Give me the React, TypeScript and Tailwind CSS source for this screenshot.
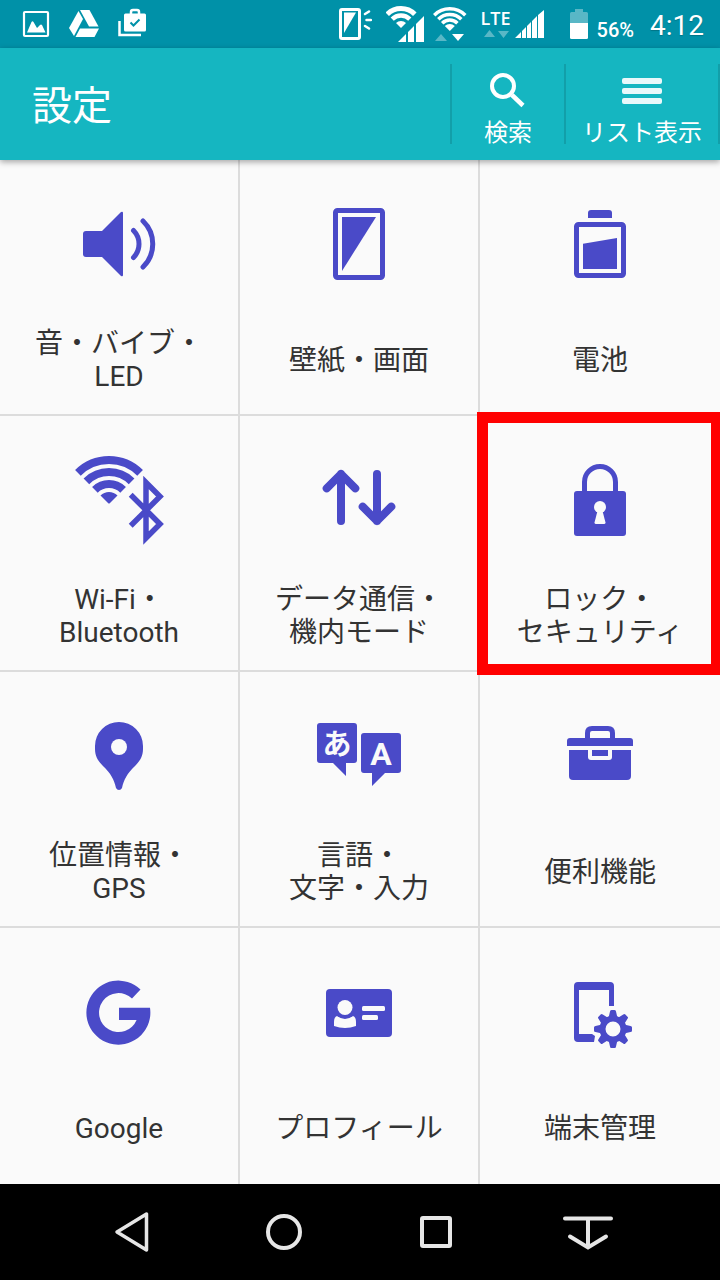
import type { ReactNode } from "react";

interface Tile {
  id: string;
  lines: string[];
  icon: ReactNode;
  highlighted?: boolean;
}

const BG = "#fafafa";

function SoundIcon() {
  return (
    <>
      <path d="M15 35h16l19-19q2-1 2 1v62q0 2-2 1L31 61H15q-3 0-3-3V38q0-3 3-3z" />
      <path
        d="M62.5 34.5a19.3 19.3 0 0 1 0 27M72 25a32 32 0 0 1 0 46"
        fill="none"
        stroke="currentColor"
        strokeWidth="5"
        strokeLinecap="round"
      />
    </>
  );
}

function ScreenIcon() {
  return (
    <>
      <rect x="24.5" y="14.5" width="47" height="67" rx="2" fill="none" stroke="currentColor" strokeWidth="5" />
      <path d="M31 21h34L31 75z" />
    </>
  );
}

function BatteryIcon() {
  return (
    <>
      <path d="M36 22v-5q0-3 3-3h18q3 0 3 3v5z" />
      <rect x="24.5" y="28.5" width="47" height="51" rx="2" fill="none" stroke="currentColor" strokeWidth="5" />
      <path d="M31 47.7L65 42v31H31z" />
    </>
  );
}

function WirelessIcon() {
  return (
    <>
      <g fill="none" stroke="currentColor" strokeWidth="8">
        <path d="M6.9 20.9a44 44 0 0 1 62.2 0" />
        <path d="M15.4 29.4a32 32 0 0 1 45.2 0" />
        <path d="M23.9 37.9a20 20 0 0 1 28.2 0" />
      </g>
      <path d="M29.5 43.5a12 12 0 0 1 17 0L39 51q-1 1-2 0z" />
      <path
        d="M59.7 42.7L89 72 75 86V30.5l14 14-29.3 29.3"
        fill="none"
        stroke="currentColor"
        strokeWidth="5.5"
      />
    </>
  );
}

function DataIcon() {
  return (
    <path
      d="M30 69V22M15.7 36.3L30 22l14.3 14.3M66 22v47M51.7 54.7L66 69l14.3-14.3"
      fill="none"
      stroke="currentColor"
      strokeWidth="8"
      strokeLinecap="round"
      strokeLinejoin="round"
    />
  );
}

function LockIcon() {
  return (
    <>
      <path d="M32.5 40V30a15.5 15.5 0 0 1 31 0v10" fill="none" stroke="currentColor" strokeWidth="5" />
      <rect x="22" y="39" width="52" height="45" rx="3" />
      <circle cx="48" cy="55" r="6" fill={BG} />
      <path d="M45.5 59h5l3 11.5q0 1.5-1.5 1.5h-8q-1.5 0-1.5-1.5z" fill={BG} />
    </>
  );
}

function PinIcon() {
  return (
    <>
      <path d="M24 38a24 24 0 0 1 48 0v3c0 8-4 13-8 17-8 8-11 13-13 22q-1 2-3 2t-3-2c-2-9-5-14-13-22-4-4-8-9-8-17z" />
      <circle cx="48" cy="39" r="8" fill={BG} />
    </>
  );
}

function LanguageIcon() {
  return (
    <>
      <path d="M9 15h34q3 0 3 3v34q0 3-3 3h-8v13L22 55H9q-3 0-3-3V18q0-3 3-3z" />
      <path d="M53 25h34q3 0 3 3v34q0 3-3 3H74L61 78V65h-8q-3 0-3-3V28q0-3 3-3z" />
      <text x="26" y="47" textAnchor="middle" fill={BG} fontSize="29" fontWeight="700">
        あ
      </text>
      <text x="70" y="57" textAnchor="middle" fill={BG} fontSize="32" fontWeight="700">
        A
      </text>
    </>
  );
}

function ToolboxIcon() {
  return (
    <>
      <path d="M35.5 31v-6q0-4.500 4.500-4.500h16q4.500 0 4.500 4.500v6" fill="none" stroke="currentColor" strokeWidth="5" />
      <path d="M15 38v-5q0-3 3-3h60q3 0 3 3v5z" />
      <path d="M17 42h62v26q0 4-4 4H21q-4 0-4-4z" />
      <path d="M36 42h24v7q0 3-3 3H39q-3 0-3-3z" fill={BG} />
      <path d="M40 42h16v6H40z" />
    </>
  );
}

function GoogleIcon() {
  return <path d="M69.5 25.5A32 32 0 1 0 79 43.7H48V56h17.6A19.500 19.500 0 1 1 61 34.500z" />;
}

function ProfileIcon() {
  return (
    <>
      <rect x="15" y="25" width="66" height="48" rx="4" />
      <g fill={BG}>
        <circle cx="34" cy="43.5" r="7.5" />
        <path d="M26 52q8 6 16 0 3 1 3 6v4q-11 4-22 0v-4q0-5 3-6z" />
        <rect x="51" y="42" width="23" height="5" rx="1.5" />
        <rect x="51" y="51" width="16" height="5" rx="1.5" />
      </g>
    </>
  );
}

function DeviceIcon() {
  const teeth = [0, 45, 90, 135, 180, 225, 270, 315];
  return (
    <>
      <path d="M26 18h32q4 0 4 4v20h-5V26H27v44h13l3 2-1 6H26q-4 0-4-4V22q0-4 4-4z" />
      <circle cx="61" cy="65" r="10.5" fill="none" stroke="currentColor" strokeWidth="6" />
      {teeth.map((angle) => (
        <path
          key={angle}
          d="M56.5 54l1.5-6.5q0-1.5 1.5-1.5h3q1.5 0 1.5 1.5l1.5 6.5z"
          transform={`rotate(${angle} 61 65)`}
        />
      ))}
    </>
  );
}

const tiles: Tile[] = [
  { id: "sound", lines: ["音・バイブ・", "LED"], icon: <SoundIcon /> },
  { id: "screen", lines: ["壁紙・画面"], icon: <ScreenIcon /> },
  { id: "battery", lines: ["電池"], icon: <BatteryIcon /> },
  { id: "wireless", lines: ["Wi-Fi・", "Bluetooth"], icon: <WirelessIcon /> },
  { id: "data", lines: ["データ通信・", "機内モード"], icon: <DataIcon /> },
  { id: "lock", lines: ["ロック・", "セキュリティ"], icon: <LockIcon />, highlighted: true },
  { id: "location", lines: ["位置情報・", "GPS"], icon: <PinIcon /> },
  { id: "language", lines: ["言語・", "文字・入力"], icon: <LanguageIcon /> },
  { id: "tools", lines: ["便利機能"], icon: <ToolboxIcon /> },
  { id: "google", lines: ["Google"], icon: <GoogleIcon /> },
  { id: "profile", lines: ["プロフィール"], icon: <ProfileIcon /> },
  { id: "device", lines: ["端末管理"], icon: <DeviceIcon /> },
];

function StatusBar() {
  return (
    <div className="flex h-12 items-center justify-between bg-[#0091a8] pr-4 pl-[22px] text-white">
      <div className="flex items-center gap-[18px]">
        <svg width="28" height="48" viewBox="0 0 28 48" fill="currentColor">
          <rect x="2" y="12" width="24" height="24" rx="1" fill="none" stroke="currentColor" strokeWidth="2.2" />
          <path d="M5 32.5L9.5 22q1-1.5 2 0l3.5 6 3-3q1-1 2 0l3.5 7.5z" />
        </svg>
        <svg width="32" height="48" viewBox="0 0 32 48" fill="currentColor">
          <path d="M10.5 11l4.5 8L6 36 1 28z" />
          <path d="M12 10h9.5l9 16.5H21z" />
          <path d="M12 28.5h19L26.5 37H7.5z" />
        </svg>
        <svg width="30" height="48" viewBox="0 0 30 48" fill="currentColor">
          <path d="M13 14v-2q0-2 2-2h4q2 0 2 2v2M1.5 21v14H23" fill="none" stroke="currentColor" strokeWidth="2.5" />
          <rect x="6" y="13.5" width="22" height="18" rx="1.5" />
          <path d="M12.5 22.5l3 3 6-6" fill="none" stroke="#0091a8" strokeWidth="2" />
        </svg>
      </div>
      <div className="flex items-center">
        <svg className="mr-3.5" width="33" height="48" viewBox="0 0 33 48" fill="currentColor">
          <rect x="1.5" y="9.5" width="19" height="29" rx="1.5" fill="none" stroke="currentColor" strokeWidth="3" />
          <path d="M5 12.5h12L5 33z" />
          <path
            d="M26 14l4-2.5M27.5 20H32M26 26l4 2.5"
            stroke="currentColor"
            strokeWidth="2.5"
            strokeLinecap="round"
          />
        </svg>
        <svg className="mr-2" width="39" height="48" viewBox="0 0 39 48" fill="currentColor">
          <path d="M1.2 14.2a19.5 19.5 0 0 1 27.6 0" fill="none" stroke="currentColor" strokeWidth="5" />
          <path d="M6.2 19.2a12.5 12.5 0 0 1 17.6 0" fill="none" stroke="currentColor" strokeWidth="4.5" />
          <path d="M10 23a7 7 0 0 1 10 0l-5 5z" />
          <path d="M12 42l8-8v8zM22 42V32l6-6v16zM30 42V24l8-8v26z" />
        </svg>
        <svg className="mr-3.5" width="34" height="48" viewBox="0 0 34 48" fill="currentColor">
          <g fill="none" stroke="currentColor" strokeWidth="3.5">
            <path d="M1.2 15.2a22 22 0 0 1 31.1 0" />
            <path d="M5.3 19.3a16.3 16.3 0 0 1 23 0" />
            <path d="M9.2 23.2a10.8 10.8 0 0 1 15.2 0" />
          </g>
          <path d="M11.8 26a7 7 0 0 1 10 0l-5 5z" />
          <path d="M2 41l6-7 6 7z" opacity="0.35" />
          <path d="M19 34h12l-6 7z" />
        </svg>
        <div className="mr-1 flex flex-col items-center gap-0.5">
          <span className="font-['Open_Sans'] text-lg leading-5 font-semibold">LTE</span>
          <svg width="26" height="10" viewBox="0 0 26 10" fill="currentColor" opacity="0.35">
            <path d="M1 7l5.5-7L12 7zM15 1h11l-5.5 7z" />
          </svg>
        </div>
        <svg className="mr-6" width="30" height="48" viewBox="0 0 30 48" fill="currentColor">
          <path d="M0 38l6-6v6zM7 38v-7l4-4v11zM12 38V26l4-4v16zM17 38V21l5-5v22zM23 38V15l6-5v28z" />
        </svg>
        <svg className="mr-2" width="20" height="48" viewBox="0 0 20 48" fill="currentColor">
          <path d="M1 23v-9.5Q1 12 2.5 12H6V9h8v3h3.5q1.5 0 1.5 1.5V23z" opacity="0.35" />
          <path d="M1 23h18v14.5q0 1.5-1.5 1.5h-15Q1 39 1 37.5z" />
        </svg>
        <span className="mr-4 pt-3 text-xl leading-6 font-medium">56%</span>
        <span className="pt-1 text-[28px] leading-8 text-shadow-xs">4:12</span>
      </div>
    </div>
  );
}

function Header() {
  return (
    <header className="relative z-10 flex h-28 items-center bg-[#15b6c1] text-white shadow-[0_2px_6px_rgba(0,0,0,0.35)]">
      <h1 className="flex-1 pt-1.5 pl-8 text-[40px] leading-[48px]">設定</h1>
      <button className="flex h-20 w-[116px] flex-col items-center gap-2 border-x-2 border-[#129fa9] pt-2">
        <svg className="shrink-0" width="40" height="40" viewBox="0 0 40 40" fill="none" stroke="currentColor">
          <circle cx="15" cy="14" r="11" strokeWidth="4" />
          <path d="M24 23l11 10.5" strokeWidth="4.5" />
        </svg>
        <span className="text-2xl leading-[26px]">検索</span>
      </button>
      <button className="flex h-20 w-[154px] flex-col items-center gap-2 border-r-2 border-[#129fa9] pt-2">
        <svg className="shrink-0" width="40" height="40" viewBox="0 0 40 40" fill="#e9f8fa">
          <rect y="6" width="40" height="6" rx="2" />
          <rect y="16" width="40" height="6" rx="2" />
          <rect y="26" width="40" height="6" rx="2" />
        </svg>
        <span className="text-2xl leading-[26px]">リスト表示</span>
      </button>
    </header>
  );
}

function SettingTile({ tile }: { tile: Tile }) {
  return (
    <button className="relative flex min-h-64 flex-col items-center border-r-2 border-b-2 border-[#dcdcdc] pt-9 nth-[3n]:border-r-0 nth-[n+10]:border-b-0">
      <svg className="text-[#4a4ac8]" width="96" height="96" viewBox="0 0 96 96" fill="currentColor">
        {tile.icon}
      </svg>
      <span className="mt-[34px] flex h-[68px] flex-col justify-center text-[28px] leading-[33px] text-[#333]">
        {tile.lines.map((line) => (
          <span key={line}>{line}</span>
        ))}
      </span>
      {tile.highlighted && (
        <span className="absolute -top-1 right-0 -bottom-[5px] -left-[3px] z-10 border-[11px] border-r-[9px] border-[#ff0000]" />
      )}
    </button>
  );
}

function NavBar() {
  return (
    <nav className="grid h-24 grid-cols-4 bg-black px-14 text-[#e6e6e6]">
      <button className="flex items-center justify-center" aria-label="戻る">
        <svg width="56" height="56" viewBox="0 0 56 56" fill="none" stroke="currentColor" strokeWidth="3.5" strokeLinejoin="round">
          <path d="M42.5 10v36L13 28z" />
        </svg>
      </button>
      <button className="flex items-center justify-center" aria-label="ホーム">
        <svg width="56" height="56" viewBox="0 0 56 56" fill="none" stroke="currentColor" strokeWidth="4">
          <circle cx="28" cy="28" r="16" />
        </svg>
      </button>
      <button className="flex items-center justify-center" aria-label="アプリ履歴">
        <svg width="56" height="56" viewBox="0 0 56 56" fill="none" stroke="currentColor" strokeWidth="4">
          <rect x="14" y="14" width="28" height="28" rx="1" />
        </svg>
      </button>
      <button className="flex items-center justify-center" aria-label="通知パネル">
        <svg width="56" height="56" viewBox="0 0 56 56" fill="none" stroke="currentColor" strokeWidth="4" strokeLinecap="round">
          <path d="M5 14.5h46M28 15v28M10 32.5l18 11 18-11" />
        </svg>
      </button>
    </nav>
  );
}

export default function App() {
  return (
    <div
      lang="ja"
      className="flex min-h-screen flex-col overflow-x-hidden bg-[#fafafa] font-['Roboto','Noto_Sans_CJK_JP',sans-serif]"
    >
      <StatusBar />
      <Header />
      <main className="grid flex-1 grid-cols-3">
        {tiles.map((tile) => (
          <SettingTile key={tile.id} tile={tile} />
        ))}
      </main>
      <NavBar />
    </div>
  );
}
